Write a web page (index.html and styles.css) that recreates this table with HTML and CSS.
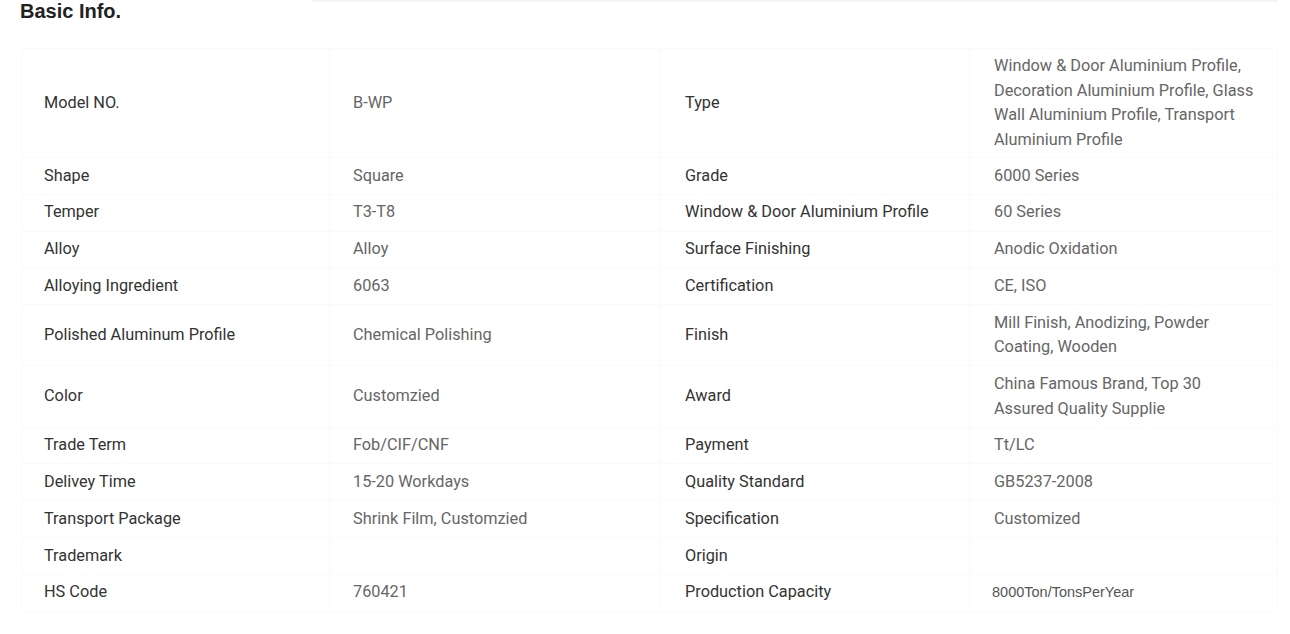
FILE: index.html
```html
<!DOCTYPE html>
<html lang="en">
<head>
<meta charset="utf-8">
<title>Basic Info.</title>
<link rel="stylesheet" href="styles.css">
</head>
<body>
<div class="top-strip"></div>
<section class="basic-info">
  <h2 class="title">Basic Info.</h2>
  <table class="info-table">
    <colgroup>
      <col class="c-label1"><col class="c-value1"><col class="c-label2"><col class="c-value2">
    </colgroup>
    <tbody>
      <tr class="tall">
        <th>Model NO.</th><td>B-WP</td>
        <th>Type</th><td>Window &amp; Door Aluminium Profile, Decoration Aluminium Profile, Glass Wall Aluminium Profile, Transport Aluminium Profile</td>
      </tr>
      <tr><th>Shape</th><td>Square</td><th>Grade</th><td>6000 Series</td></tr>
      <tr><th>Temper</th><td>T3-T8</td><th>Window &amp; Door Aluminium Profile</th><td>60 Series</td></tr>
      <tr><th>Alloy</th><td>Alloy</td><th>Surface Finishing</th><td>Anodic Oxidation</td></tr>
      <tr><th>Alloying Ingredient</th><td>6063</td><th>Certification</th><td>CE, ISO</td></tr>
      <tr><th>Polished Aluminum Profile</th><td>Chemical Polishing</td><th>Finish</th><td>Mill Finish, Anodizing, Powder Coating, Wooden</td></tr>
      <tr><th>Color</th><td>Customzied</td><th>Award</th><td>China Famous Brand, Top 30 Assured Quality Supplie</td></tr>
      <tr><th>Trade Term</th><td>Fob/CIF/CNF</td><th>Payment</th><td>Tt/LC</td></tr>
      <tr><th>Delivey Time</th><td>15-20 Workdays</td><th>Quality Standard</th><td>GB5237-2008</td></tr>
      <tr><th>Transport Package</th><td>Shrink Film, Customzied</td><th>Specification</th><td>Customized</td></tr>
      <tr><th>Trademark</th><td></td><th>Origin</th><td></td></tr>
      <tr><th>HS Code</th><td>760421</td><th>Production Capacity</th><td class="small">8000Ton/TonsPerYear</td></tr>
    </tbody>
  </table>
</section>
</body>
</html>
```

FILE: styles.css
```css
html, body {
  margin: 0;
  padding: 0;
  background: #ffffff;
}

body {
  font-family: Roboto, "Liberation Sans", Arial, sans-serif;
  color: #333;
  position: relative;
}

.top-strip {
  position: absolute;
  left: 312px;
  top: 0;
  width: 966px;
  height: 2px;
  background: #f5f5f5;
}

.basic-info {
  padding: 0 0 0 20px;
}

.title {
  margin: 0;
  font-family: "Liberation Sans", Arial, sans-serif;
  font-size: 20px;
  font-weight: 700;
  line-height: 23px;
  color: #222;
}

.info-table {
  margin: 25px 0 0 1px;
  width: 1256px;
  border-collapse: collapse;
  table-layout: fixed;
  font-size: 16.3px;
  line-height: 24.5px;
}

.c-label1 { width: 308px; }
.c-value1 { width: 331px; }
.c-label2 { width: 309px; }
.c-value2 { width: 308px; }

.info-table th,
.info-table td {
  border: 1px solid #fafafa;
  padding: 5.65px 18px 5.65px 22px;
  vertical-align: middle;
  text-align: left;
}

.info-table tr.tall th,
.info-table tr.tall td {
  padding-top: 5px;
  padding-bottom: 5px;
}

.info-table th {
  font-weight: 400;
  color: #333;
}

.info-table td {
  font-weight: 400;
  color: #666;
  padding-left: 23px;
}

.info-table th:nth-child(3) {
  padding-left: 24px;
}

.info-table td:nth-child(4) {
  padding-left: 24px;
}

.info-table td.small {
  font-family: "Liberation Sans", Arial, sans-serif;
  font-size: 14.5px;
  font-weight: 400;
  color: #555;
  padding-left: 22px;
}
```
